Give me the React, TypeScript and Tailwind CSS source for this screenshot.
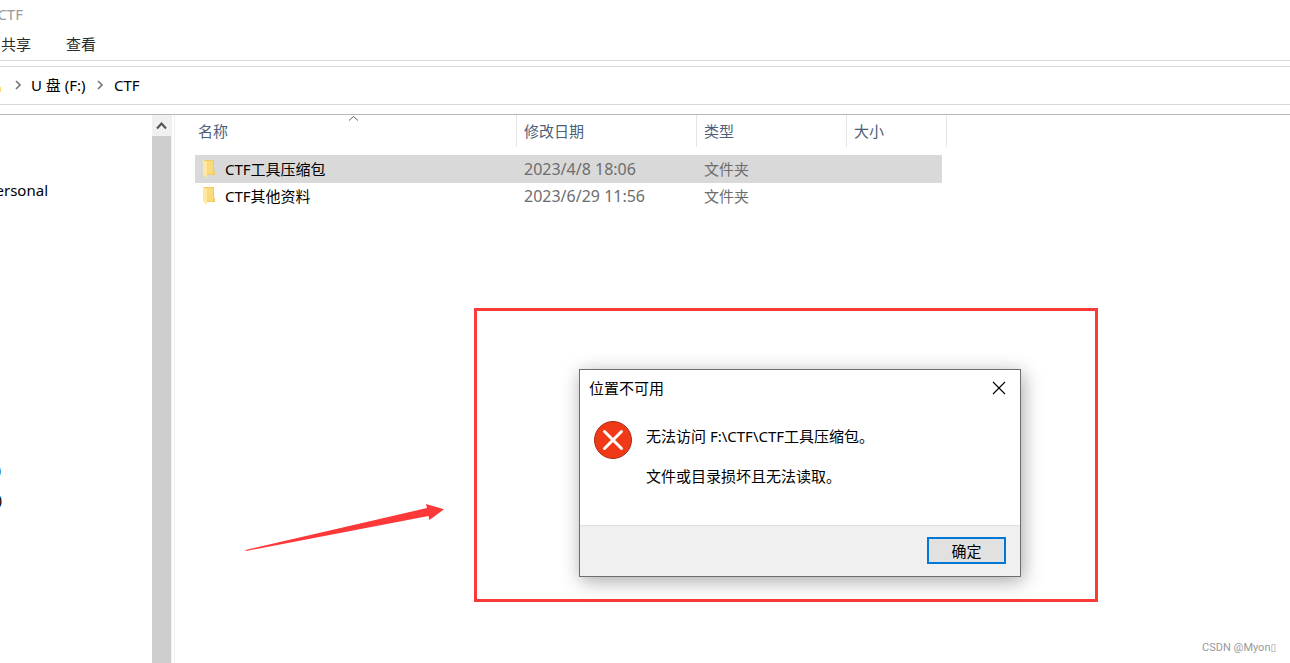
import React from 'react';

const files = [
  { name: 'CTF工具压缩包', date: '2023/4/8 18:06', type: '文件夹', selected: true },
  { name: 'CTF其他资料', date: '2023/6/29 11:56', type: '文件夹', selected: false },
];

const FolderIcon: React.FC = () => (
  <svg width="14" height="18" viewBox="0 0 14 18" className="shrink-0" aria-hidden="true">
    <path d="M1 0h11v11h1v4H5L1 14z" fill="#f3cb62" />
    <path d="M4 1h7v13H4z" fill="#f9da7c" />
    <path d="M1 0l4 2v15l-1 .5L1 14z" fill="#ffe8a0" />
  </svg>
);

const Chevron: React.FC = () => (
  <svg width="7" height="10" viewBox="0 0 7 10" fill="none" stroke="#777" strokeWidth="1.7" aria-hidden="true">
    <path d="M1 1l4 4-4 4" />
  </svg>
);

const AddressBar: React.FC = () => (
  <nav aria-label="地址" className="flex h-[39px] items-center overflow-hidden border-y border-[#d9d9d9] text-[15px] text-black">
    <span className="mt-2 h-[5px] w-px bg-[#ffd978]" />
    <span className="ml-[14px] flex items-center pb-0.5">
      <Chevron />
    </span>
    <a href="#drive" className="ml-2 w-[59px] whitespace-nowrap pl-px">U 盘 (F:)</a>
    <span className="ml-2 flex items-center pb-0.5">
      <Chevron />
    </span>
    <a href="#ctf" className="ml-[10px]">CTF</a>
  </nav>
);

const Sidebar: React.FC = () => (
  <aside className="flex w-[175px] shrink-0 border-r border-[#f0f0f0]">
    <div className="flex w-[152px] flex-col items-start pt-[63px] text-[15px] leading-6 text-black">
      <span className="flex w-12 justify-end overflow-hidden">Personal</span>
      <span className="mt-[255px] flex w-px justify-end overflow-hidden">)</span>
      <span className="mt-[6px] flex w-[2px] justify-end overflow-hidden">)</span>
    </div>
    <div className="flex w-5 flex-col bg-[#f0f0f0]">
      <button aria-label="向上滚动" className="flex h-[21px] items-center justify-center">
        <svg width="12" height="8" viewBox="0 0 12 8" fill="none" stroke="#505050" strokeWidth="2">
          <path d="M1 6.500l4.500-5 4.500 5" />
        </svg>
      </button>
      <div className="w-[19px] grow bg-[#cdcdcd]" />
    </div>
  </aside>
);

const FileTable: React.FC = () => (
  <table className="w-[752px] table-fixed border-separate border-spacing-0 text-left text-[15px]">
    <colgroup>
      <col className="w-[322px]" />
      <col className="w-[180px]" />
      <col className="w-[150px]" />
      <col className="w-[95px]" />
      <col className="w-[5px]" />
    </colgroup>
    <thead className="text-[#4c607a]">
      <tr className="h-8">
        <th className="relative border-r border-[#e5e5e5] pl-[3px] font-normal">
          名称
          <svg className="absolute left-[153px] top-0" width="11" height="7" viewBox="0 0 11 7" fill="none" stroke="#5f5f5f">
            <path d="M1 5.500l4.500-4 4.500 4" />
          </svg>
        </th>
        <th className="border-r border-[#e5e5e5] pl-[7px] font-normal">修改日期</th>
        <th className="border-r border-[#e5e5e5] pl-[7px] font-normal">类型</th>
        <th colSpan={2} className="border-r border-[#e5e5e5] pl-[7px] font-normal">大小</th>
      </tr>
    </thead>
    <tbody className="text-[#6d6d6d]">
      <tr className="h-2">
        <td colSpan={5} />
      </tr>
      {files.map((file) => {
        const cell = file.selected ? 'h-7 bg-[#d9d9d9]' : 'h-[26px]';
        return (
          <tr key={file.name}>
            <td className={cell}>
              <div className="flex items-center pl-[7px] text-black">
                <FolderIcon />
                <span className="ml-[9px]">{file.name}</span>
              </div>
            </td>
            <td className={`pl-[7px] text-[16px] ${cell}`}>{file.date}</td>
            <td className={`pl-[7px] ${cell}`}>{file.type}</td>
            <td className={cell} />
            <td />
          </tr>
        );
      })}
    </tbody>
  </table>
);

const ErrorDialog: React.FC = () => (
  <div
    role="alertdialog"
    aria-labelledby="dialog-title"
    aria-describedby="dialog-text"
    className="absolute left-[579px] top-[369px] w-[442px] border border-[#6e6e6e] bg-white text-[15px] text-black shadow-[2px_4px_18px_rgba(0,0,0,0.35)]"
  >
    <div className="flex h-9 items-center justify-between pl-[9px] pr-[14px]">
      <h2 id="dialog-title">位置不可用</h2>
      <button aria-label="关闭">
        <svg width="14" height="14" viewBox="0 0 14 14" stroke="#000" strokeWidth="1.1">
          <path d="M1 1l12 12M13 1L1 13" />
        </svg>
      </button>
    </div>
    <div className="flex h-[119px] pl-[14px] pt-[14px]">
      <svg width="38" height="40" viewBox="0 0 38 40" aria-hidden="true">
        <circle cx="19" cy="20" r="18.500" fill="#f03a17" stroke="#a92c14" />
        <path d="M10.500 11.500l17 17M27.500 11.500l-17 17" stroke="#fff" strokeWidth="3" strokeLinecap="round" />
      </svg>
      <div id="dialog-text" className="ml-[14px] leading-5">
        <p className="mt-[6px]">无法访问 F:\CTF\CTF工具压缩包。</p>
        <p className="mt-5">文件或目录损坏且无法读取。</p>
      </div>
    </div>
    <div className="flex h-[51px] items-start justify-end border-t border-[#dfdfdf] bg-[#f0f0f0] pr-[14px] pt-[11px]">
      <button className="h-[27px] w-[79px] border-2 border-[#0078d7] bg-[#e1e1e1] leading-5">确定</button>
    </div>
  </div>
);

export default function App() {
  return (
    <div className="relative flex min-h-screen flex-col overflow-hidden bg-white font-['Noto_Sans','Noto_Sans_CJK_SC',sans-serif]">
      <header className="mb-[5px] border-b border-[#d9d9d9] text-[15px]">
        <div className="flex h-7 w-[23px] items-center justify-end overflow-hidden text-[#999]">CTF</div>
        <div className="flex h-8 items-center gap-[35px] pl-px text-[#2b2b2b]">
          <button>共享</button>
          <button>查看</button>
        </div>
      </header>
      <AddressBar />
      <main className="mt-[9px] flex grow border-t border-[#b9b9b9]">
        <Sidebar />
        <section className="grow pl-5">
          <FileTable />
        </section>
      </main>

      {/* markup drawn over the window */}
      <div className="absolute left-[474px] top-[308px] h-[294px] w-[624px] border-[3px] border-[#fa3939]" />
      <svg className="absolute left-[245px] top-[503px]" width="200" height="50" viewBox="0 0 200 50" aria-hidden="true">
        <path d="M0.500 47L182 5l-1-4 18 5.300-14.500 10.700-1-4L1 48z" fill="#fc3838" />
      </svg>
      <ErrorDialog />

      <footer className="absolute bottom-[7px] right-[14px] flex items-center font-['Roboto',sans-serif] text-[11px] leading-4 text-[#999]">
        CSDN @Myon
        <span className="font-['DejaVu_Sans',sans-serif] text-[10px]">▯</span>
      </footer>
    </div>
  );
}
